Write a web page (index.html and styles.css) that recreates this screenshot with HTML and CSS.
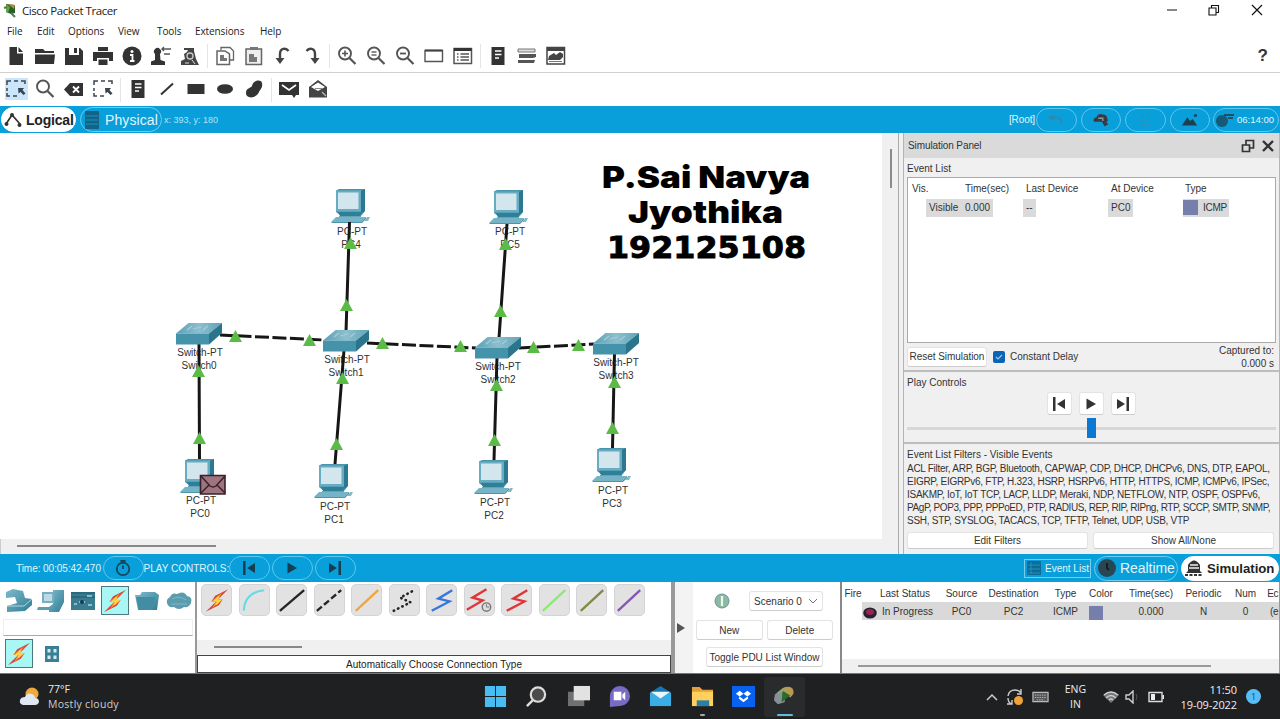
FILE: index.html
```html
<!DOCTYPE html>
<html lang="en">
<head>
<meta charset="utf-8">
<title>Cisco Packet Tracer</title>
<link rel="stylesheet" href="styles.css">
</head>
<body>
<svg class="defs" width="0" height="0" aria-hidden="true">
  <defs>
    <linearGradient id="gTeal" x1="0" y1="0" x2="1" y2="1"><stop offset="0" stop-color="#7fb9cb"/><stop offset="1" stop-color="#2f7d95"/></linearGradient>
    <linearGradient id="gTop" x1="0" y1="0" x2="1" y2="0"><stop offset="0" stop-color="#5aa0b6"/><stop offset=".5" stop-color="#8dbfce"/><stop offset="1" stop-color="#5fa5ba"/></linearGradient>
    <symbol id="pc" viewBox="0 0 40 36" overflow="visible">
      <path d="M5 1.500 8 0H34V22L30 27H10L5 23Z" fill="#4796ae"/>
      <path d="M30 2 34 0V22L30 25Z" fill="#2b7890"/>
      <rect x="5" y="1.500" width="25" height="21" fill="#69abc0"/>
      <rect x="7" y="3.500" width="20.500" height="16.500" fill="#d3e6ee"/>
      <path d="M7 23H31L29 27H9Z" fill="#2f7f98"/>
      <path d="M8 27H30V29H8Z" fill="#5fa5ba"/>
      <path d="M5 28H35L30 33H0Z" fill="#76b3c6"/><path d="M0 33H30L35 28V30L31 34H1Z" fill="#4a95ab"/>
      <path d="M33.500 32 36 28H39L37 32Z" fill="#84b8c8"/>
    </symbol>
    <symbol id="switch" viewBox="0 0 46 22" overflow="visible">
      <path d="M0 10.500 12.500 0H46L33 10.500Z" fill="url(#gTop)"/>
      <path d="M0 10.500H33V21.500H0Z" fill="#4593ab"/>
      <path d="M33 10.500 46 0V10L33 21.500Z" fill="#2b758c"/>
      <path d="M11 7 16 3M17 6 25 4M27 7 32 3" stroke="#a5cdd9" stroke-width="1.200"/>
    </symbol>
    <symbol id="up" viewBox="0 0 13 12" overflow="visible"><path d="M6.500 0 13 12H0Z" fill="#5cba47"/></symbol>
    <symbol id="bolt" viewBox="0 0 28 28"><path d="M26 2 12 9 8 15 13 15 2 26 16 19 20 13 15 13Z" fill="#d8493c"/><path d="M19 6 8 15H13L9 22 20 13H15Z" fill="#f7a51f"/><path d="M16 10 12 14H17L13 18" stroke="#ffd34a" stroke-width="2" fill="none"/></symbol>
    <symbol id="note" viewBox="0 0 20 20"><path fill="#333" d="M3.500 1H16.500V19H3.500Z"/><path d="M7 5H13.500M7 8.500H13.500M7 12H11" stroke="#fff" stroke-width="1.500"/></symbol>
    <symbol id="select" viewBox="0 0 20 20"><path d="M1 6V2H5M8 2H12M15 2H19V5M1 9V12M1 14V17H4M7 17H11" fill="none" stroke="#3b4652" stroke-width="1.500"/><path d="M12 9H18L16.500 11 19.500 14.500 17.500 16 14.500 13 12.500 14.500Z" fill="#3b4652"/></symbol>
    <symbol id="lens" viewBox="0 0 20 20"><circle cx="8" cy="7.500" r="6" fill="none" stroke="#555" stroke-width="1.900"/><path d="M12.500 12 18.500 18" stroke="#555" stroke-width="2.200"/></symbol>
    <symbol id="prev" viewBox="0 0 16 16"><path d="M2 1H4.500V15H2ZM14 3V13L6 8Z" fill="currentColor"/></symbol>
    <symbol id="play" viewBox="0 0 16 16"><path d="M3.500 2.500 13 8 3.500 13.500Z" fill="currentColor"/></symbol>
    <symbol id="next" viewBox="0 0 16 16"><path d="M14 1H11.500V15H14ZM2 3V13L10 8Z" fill="currentColor"/></symbol>
  </defs>
</svg>

<div class="app">
  <header class="titlebar">
    <svg class="logo" viewBox="0 0 14 16"><path d="M3 1 12 2V10L8 11 3 9Z" fill="#275f29"/><path d="M5 1 12 2 11 6Z" fill="#bb8a37"/><path d="M3 1 7 4 5 10 3 9Z" fill="#63a443"/><path d="M1 5 4 4M8 10 12 14" stroke="#547b52" stroke-width="2"/></svg>
    <span class="app-name">Cisco Packet Tracer</span>
    <span class="win-buttons">
      <svg viewBox="0 0 12 12"><path d="M1 6H11" stroke="#111"/></svg>
      <svg viewBox="0 0 12 12"><path d="M1 4H8V11H1ZM3.500 4V1.500H10.500V8.500H8" fill="none" stroke="#111" stroke-width="1.100"/></svg>
      <svg viewBox="0 0 12 12"><path d="M1 1 11 11M11 1 1 11" stroke="#111" stroke-width="1.200"/></svg>
    </span>
  </header>

  <nav class="menu"><span>File</span><span>Edit</span><span>Options</span><span>View</span><span>Tools</span><span>Extensions</span><span>Help</span></nav>

  <div class="toolbar main-tools">
    <i><svg viewBox="0 0 20 20"><path fill="#333" d="M3.500 1H11V7.500H17V19H3.500ZM12.500 1 17 6H12.500Z"/></svg></i>
    <i><svg viewBox="0 0 20 20"><path fill="#333" d="M0 3H8L10 5H19V7H0ZM0 8.500H20L19 18H0Z"/></svg></i>
    <i><svg viewBox="0 0 20 20"><path fill="#333" d="M1 2H5V9H15V2H16L19 5V19H1Z"/><path fill="#333" d="M10 2H13V7H10Z"/></svg></i>
    <i><svg viewBox="0 0 20 20"><path fill="#333" d="M5 1H15V5H5ZM0 6H20V15H16V12H4V15H0ZM5.500 13.500H14.500V19H5.500Z"/></svg></i>
    <i><svg viewBox="0 0 20 20"><circle cx="10" cy="10" r="9.500" fill="#333"/><circle cx="10" cy="5.500" r="1.500" fill="#fff"/><path d="M8 9H10.500V15M8 15H12.500" fill="none" stroke="#fff" stroke-width="1.800"/></svg></i>
    <i><svg viewBox="0 0 20 20"><path fill="#333" d="M4 8a3.500 3.500 0 1 1 5 0L9.500 14 14 15.500V19H0V15.500L4 14Z"/><path d="M11 3H20M13 8H19M13 1 11 3 13 5" stroke="#555" stroke-width="1.400" fill="none"/></svg></i>
    <i><svg viewBox="0 0 20 20"><path fill="#444" d="M1 19V15L5 13 4 8 7 6 8 4H4V2H14V5L16 13 19 19Z"/><circle cx="10" cy="10" r="3" fill="none" stroke="#ccc" stroke-width="1.300"/><path d="M5 17H9M12 14 15 18" stroke="#ddd"/></svg></i>
    <b></b>
    <i><svg viewBox="0 0 20 20"><path d="M6 4V1.500H15L18.500 5V14H15" fill="none" stroke="#666" stroke-width="1.300"/><path d="M2 5H10L14.500 8V18.500H2Z" fill="#fff" stroke="#666" stroke-width="1.500"/><path d="M5 9H9V12H12V15H5Z" fill="#777"/></svg></i>
    <i><svg viewBox="0 0 20 20"><path d="M2 3H17.500V18.500H2Z" fill="#eee" stroke="#666" stroke-width="1.500"/><path d="M6 1H14V4H6ZM5 8H10V11H13V16H5Z" fill="#777"/></svg></i>
    <i><svg viewBox="0 0 20 20"><path d="M15.500 5C13 1.500 7 2 7 8V15" fill="none" stroke="#444" stroke-width="2.400"/><path d="M2.500 12H11.500L7 18Z" fill="#444"/></svg></i>
    <i><svg viewBox="0 0 20 20"><path d="M4.500 5C7 1.500 13 2 13 8V15" fill="none" stroke="#444" stroke-width="2.400"/><path d="M8.500 12H17.500L13 18Z" fill="#444"/></svg></i>
    <b></b>
    <i><svg viewBox="0 0 20 20"><use href="#lens"/><path d="M5 7.500H11M8 4.500V10.500" stroke="#555" stroke-width="1.600"/></svg></i>
    <i><svg viewBox="0 0 20 20"><use href="#lens"/><path d="M5.500 6H10.500M5.500 9H10.500" stroke="#666" stroke-width="1.600"/></svg></i>
    <i><svg viewBox="0 0 20 20"><use href="#lens"/><path d="M5 7.500H11" stroke="#555" stroke-width="1.800"/></svg></i>
    <i><svg viewBox="0 0 20 20"><path d="M1 4.500H18.500V15.500H1Z" fill="#fff" stroke="#555" stroke-width="1.400"/><path d="M1 4.500H18.500" stroke="#444" stroke-width="2"/></svg></i>
    <i><svg viewBox="0 0 20 20"><path d="M1 2.500H18.500V17.500H1Z" fill="#fff" stroke="#555" stroke-width="1.500"/><path d="M1 3.500H18.500" stroke="#333" stroke-width="3"/><path d="M4 8H5.500M4 11H5.500M4 14H5.500M7.500 8H16M7.500 11H16M7.500 14H16" stroke="#555" stroke-width="1.400"/></svg></i>
    <b></b>
    <i><svg viewBox="0 0 20 20"><use href="#note"/></svg></i>
    <i><svg viewBox="0 0 20 20"><path d="M1 3H18V6H1Z" fill="#ddd" stroke="#777"/><path d="M2 8H19V11L16 12H2ZM1 14H18L17 17H1Z" fill="#555"/></svg></i>
    <i><svg viewBox="0 0 20 20"><path d="M1 1.500H18.500V18H1Z" fill="#fff" stroke="#444" stroke-width="1.500"/><path d="M1 1H18.500V5H1ZM2 14 3 10 8 7 10 9 14 6 17 8V11L14 14Z" fill="#444"/><path d="M3 15.500H16" stroke="#777"/></svg></i>
    <span class="help">?</span>
  </div>

  <div class="toolbar edit-tools">
    <i class="active"><svg viewBox="0 0 20 20"><use href="#select"/></svg></i>
    <i><svg viewBox="0 0 20 20"><use href="#lens"/></svg></i>
    <i><svg viewBox="0 0 20 20"><path fill="#333" d="M0 10.500 6 4H19V17H6Z"/><path d="M9 7.500 15 13.500M15 7.500 9 13.500" stroke="#fff" stroke-width="1.800"/></svg></i>
    <i><svg viewBox="0 0 20 20"><use href="#select"/></svg></i>
    <b></b>
    <i><svg viewBox="0 0 20 20"><use href="#note"/></svg></i>
    <i><svg viewBox="0 0 20 20"><path d="M4 15.500 16 4.500" stroke="#333" stroke-width="2"/></svg></i>
    <i><svg viewBox="0 0 20 20"><path fill="#333" d="M1.500 5H18.500V15H1.500Z"/></svg></i>
    <i><svg viewBox="0 0 20 20"><ellipse cx="10" cy="10" rx="8" ry="4.800" fill="#333"/></svg></i>
    <i><svg viewBox="0 0 20 20"><path fill="#333" d="M8 7C9 1 17 0 18 4 19 9 16 10 15 13 12 20 2 20 2 14 2 9 7 9 8 7Z"/></svg></i>
    <b></b>
    <i><svg viewBox="0 0 20 20"><path fill="#333" d="M0 3H20V16H17L15 19 13 16H0Z"/><path d="M3 6 10 11 17 6" fill="none" stroke="#fff" stroke-width="1.600"/></svg></i>
    <i><svg viewBox="0 0 20 20"><path d="M1 8 10 1 19 8V18.500H1Z" fill="#444"/><path d="M3 8 10 3.500 17 8 10 12Z" fill="#fff"/><path d="M7 9.500H14" stroke="#888"/><path d="M14 13 18 17" stroke="#bbb" stroke-width="1.300"/></svg></i>
  </div>

  <div class="bluebar top-blue">
    <span class="tab on logical"><svg viewBox="0 0 18 16"><path d="M2 12 8 3 16 12" fill="none" stroke="#333" stroke-width="1.700"/><circle cx="2.500" cy="12" r="2" fill="#333"/><circle cx="8" cy="3" r="2" fill="#333"/><circle cx="15.500" cy="13" r="2" fill="#333"/></svg>Logical</span>
    <span class="tab physical"><svg viewBox="0 0 16 18"><path fill="#126386" d="M1 0H15V18H1Z"/><path d="M2 5H14M2 9H14M2 13H14" stroke="#1586b3" stroke-width="1.500"/></svg>Physical</span>
    <span class="coords">x: 393, y: 180</span>
    <span class="root">[Root]</span>
    <span class="pill"><svg viewBox="0 0 20 16"><path d="M8 3 3 5 8 8M4 5H10Q16 6 16 11" fill="none" stroke="#45819a" stroke-width="1.700"/></svg></span>
    <span class="pill"><svg viewBox="0 0 20 16"><path d="M2 10Q1 6 5 5 7 0 12 2 17 2 17 7 19 9 16 10L18 13 14 15 11 10Z" fill="#3b3a42"/><path d="M7 6H12V9" stroke="#8a9aa4" stroke-width="1.500" fill="none"/></svg></span>
    <span class="pill"><svg viewBox="0 0 20 16"><path d="M5 3H9M12 3H15M5 7V9M15 7V9M6 13H10M13 13H15" stroke="#388aa9" stroke-width="1.500"/></svg></span>
    <span class="pill"><svg viewBox="0 0 20 16"><path d="M1 14 7 5 10 9 13 7 18 14Z" fill="#1e3f50"/><circle cx="16" cy="3" r="1.800" fill="#1e3f50"/></svg></span>
    <span class="pill clock"><svg viewBox="0 0 20 16"><circle cx="7" cy="9" r="6" fill="#185975"/><path d="M9 3H19M13 6H18" stroke="#234e61" stroke-width="2"/></svg>06:14:00</span>
  </div>

  <main class="work">
    <section class="canvas-col">
      <div class="canvas-row">
        <svg class="canvas" viewBox="0 133 882 406">
          <g>
            <use href="#pc" x="331" y="189" width="40" height="36"/>
            <use href="#pc" x="489" y="190" width="40" height="36"/>
            <use href="#pc" x="180" y="459" width="40" height="36"/>
            <use href="#pc" x="314" y="464" width="40" height="36"/>
            <use href="#pc" x="474" y="460" width="40" height="36"/>
            <use href="#pc" x="592" y="448" width="40" height="36"/>
          </g>
          <g class="dev-label">
            <text x="352" y="234.500">PC-PT</text><text x="351" y="247.500">PC4</text>
            <text x="510" y="235">PC-PT</text><text x="510" y="248">PC5</text>
            <text x="200" y="356">Switch-PT</text><text x="199" y="369">Switch0</text>
            <text x="347" y="363">Switch-PT</text><text x="346" y="376">Switch1</text>
            <text x="498" y="370">Switch-PT</text><text x="498" y="383">Switch2</text>
            <text x="616" y="366">Switch-PT</text><text x="616" y="379">Switch3</text>
            <text x="201" y="504">PC-PT</text><text x="200" y="517">PC0</text>
            <text x="335" y="510">PC-PT</text><text x="334" y="523">PC1</text>
            <text x="495" y="506">PC-PT</text><text x="494" y="519">PC2</text>
            <text x="613" y="494">PC-PT</text><text x="612" y="507">PC3</text>
          </g>
          <g stroke="#161616" stroke-width="3" fill="none">
            <path d="M199 343 199.500 459M349.500 222 346 332M344 350 335 464M507 224 499 338M497 357 494 460M614.500 353 612.500 448"/>
            <path d="M220 335 324 340M367 343 476 348M519 348 594 344" stroke-dasharray="14 3.500"/>
          </g>
          <use href="#switch" x="176" y="323" width="46" height="22"/>
          <use href="#switch" x="323" y="330" width="46" height="22"/>
          <use href="#switch" x="475" y="337" width="46" height="22"/>
          <use href="#switch" x="593" y="333" width="46" height="22"/>
          <g>
            <use href="#up" x="229" y="330" width="13" height="12"/><use href="#up" x="303" y="334" width="13" height="12"/>
            <use href="#up" x="376" y="337" width="13" height="12"/><use href="#up" x="454" y="340" width="13" height="12"/>
            <use href="#up" x="527" y="341" width="13" height="12"/><use href="#up" x="572" y="339" width="13" height="12"/>
            <use href="#up" x="340" y="299" width="13" height="12"/><use href="#up" x="344" y="237" width="13" height="12"/>
            <use href="#up" x="494" y="305" width="13" height="12"/><use href="#up" x="499" y="238" width="13" height="12"/>
            <use href="#up" x="192" y="365" width="13" height="12"/><use href="#up" x="193" y="432" width="13" height="12"/>
            <use href="#up" x="336" y="372" width="13" height="12"/><use href="#up" x="330" y="438" width="13" height="12"/>
            <use href="#up" x="490" y="379" width="13" height="12"/><use href="#up" x="488" y="434" width="13" height="12"/>
            <use href="#up" x="608" y="376" width="13" height="12"/><use href="#up" x="606" y="422" width="13" height="12"/>
          </g>
          <path d="M200.500 475.500H225V494H200.500Z" fill="#9d7480" stroke="#3a2029" stroke-width="1.600"/>
          <path d="M201 476 210 486Q213 488 216 486L225 476M201 493 209 485M225 493 217 485" fill="none" stroke="#3a2029" stroke-width="1.500"/>
          <g class="owner">
            <text x="602" y="188" textLength="208" lengthAdjust="spacingAndGlyphs">P.Sai Navya</text>
            <text x="628" y="222.500" textLength="155" lengthAdjust="spacingAndGlyphs">Jyothika</text>
            <text class="num" x="607" y="257.500" textLength="199" lengthAdjust="spacingAndGlyphs">192125108</text>
          </g>
        </svg>
        <div class="vscroll"><span></span></div>
      </div>
      <div class="hscroll"><span></span></div>
    </section>

    <aside class="sim">
      <div class="sim-title"><span>Simulation Panel</span>
        <svg viewBox="0 0 14 14"><path d="M1.500 6H8.500V12.500H1.500ZM5 6V1.500H12.500V9H8.500" fill="none" stroke="#333" stroke-width="1.700"/></svg>
        <svg viewBox="0 0 14 14"><path d="M2 2 12 12M12 2 2 12" stroke="#333" stroke-width="2.400"/></svg>
      </div>
      <div class="events">
        <div class="label">Event List</div>
        <div class="event-box">
          <div class="event-row head"><span>Vis.</span><span>Time(sec)</span><span>Last Device</span><span>At Device</span><span>Type</span></div>
          <div class="event-row"><span class="hl vis">Visible</span><span class="hl time">0.000</span><span class="hl">--</span><span class="hl">PC0</span><span class="hl icmp"><em></em>ICMP</span></div>
        </div>
        <div class="reset-row"><button class="btn reset">Reset Simulation</button><span class="check"><svg viewBox="0 0 12 12"><path d="M3 6 5 8 9 4" fill="none" stroke="#9cc8f0" stroke-width="1.200"/></svg></span><span class="delay">Constant Delay</span><span class="captured">Captured to:<br>0.000 s</span></div>
      </div>
      <div class="controls">
        <div class="label">Play Controls</div>
        <div class="play-row"><button class="btn"><svg><use href="#prev"/></svg></button><button class="btn"><svg><use href="#play"/></svg></button><button class="btn"><svg><use href="#next"/></svg></button></div>
        <div class="slider"><span></span></div>
      </div>
      <div class="filters">
        <div class="label">Event List Filters - Visible Events</div>
        <p>ACL Filter, ARP, BGP, Bluetooth, CAPWAP, CDP, DHCP, DHCPv6, DNS, DTP, EAPOL,<br>EIGRP, EIGRPv6, FTP, H.323, HSRP, HSRPv6, HTTP, HTTPS, ICMP, ICMPv6, IPSec,<br>ISAKMP, IoT, IoT TCP, LACP, LLDP, Meraki, NDP, NETFLOW, NTP, OSPF, OSPFv6,<br><span class="tight">PAgP, POP3, PPP, PPPoED, PTP, RADIUS, REP, RIP, RIPng, RTP, SCCP, SMTP, SNMP,</span><br>SSH, STP, SYSLOG, TACACS, TCP, TFTP, Telnet, UDP, USB, VTP</p>
        <div class="filter-buttons"><button class="btn">Edit Filters</button><button class="btn">Show All/None</button></div>
      </div>
    </aside>
  </main>

  <div class="bluebar low-blue">
    <span class="time">Time: 00:05:42.470</span>
    <span class="pill"><svg viewBox="0 0 20 18"><circle cx="10" cy="10" r="7" fill="none" stroke="#15455c" stroke-width="1.900"/><path d="M10 6V10M7 1H13M10 1V4" stroke="#15455c" stroke-width="1.900"/></svg></span>
    <span class="pc-label">PLAY CONTROLS:</span>
    <span class="pill"><svg viewBox="0 0 16 16"><use href="#prev"/></svg></span>
    <span class="pill"><svg viewBox="0 0 16 16"><use href="#play"/></svg></span>
    <span class="pill"><svg viewBox="0 0 16 16"><use href="#next"/></svg></span>
    <span class="evlist"><svg viewBox="0 0 14 14"><path d="M0 0H14V14H0Z" fill="#0d6c96"/><path d="M1 4H13M1 8H13M1 12H13M4 1V13" stroke="#2590bc"/></svg>Event List</span>
    <span class="tab realtime"><svg viewBox="0 0 18 18"><circle cx="9" cy="9" r="9" fill="#2b4653"/><path d="M9 4V9L11 11" fill="none" stroke="#102029" stroke-width="2"/></svg>Realtime</span>
    <span class="tab on simulation"><svg viewBox="0 0 20 18"><path d="M4 6Q10-3 16 6V12L18 14H2L4 12Z" fill="#333"/><path d="M6 6H14M5 9H15" stroke="#eee" stroke-width="1.300"/><path d="M1 16H19" stroke="#333" stroke-width="2" stroke-dasharray="3 1.500"/></svg>Simulation</span>
  </div>

  <section class="bottom">
    <div class="devices">
      <div class="cats">
        <i><svg viewBox="0 0 28 28"><path d="M1 5 8 2 18 4 20 11 27 12V18L20 24 2 25V19L12 16 10 10 1 11Z" fill="url(#gTeal)"/><path d="M2 19H19L27 12" fill="none" stroke="#b0d5df"/></svg></i>
        <i><svg viewBox="0 0 28 28"><path d="M16 3H27V15L22 25H12V20L16 17Z" fill="url(#gTeal)"/><path d="M5 5H17V16H5Z" fill="#77afc0"/><path d="M7 7H15V14H7Z" fill="#bdd9e2"/><path d="M1 20H15L13 23H0Z" fill="#5d9db0"/></svg></i>
        <i><svg viewBox="0 0 28 28"><path d="M2 5H26V23H2Z" fill="#397c92"/><path d="M2 6H26M2 10H26" stroke="#1f566a"/><path d="M10 15H16M18 9H23M5 17H8M19 18H23" stroke="#8ebbc8" stroke-width="2"/><circle cx="13" cy="15" r="2" fill="#143b49"/></svg></i>
        <i class="sel"><svg viewBox="0 0 28 28"><use href="#bolt"/></svg></i>
        <i><svg viewBox="0 0 28 28"><path d="M2 8H7L9 5H22L26 8 24 23H5Z" fill="url(#gTeal)"/><path d="M3 10H22L20 23H6Z" fill="#438da4"/></svg></i>
        <i><svg viewBox="0 0 28 28"><path d="M5 10Q7 5 12 7 19 3 22 9 28 10 26 16 24 21 19 20 14 24 9 20 3 21 2 16 1 12 5 10Z" fill="#5b9caf"/><path d="M7 12Q14 8 21 13M6 17H22" fill="none" stroke="#83b6c5"/></svg></i>
      </div>
      <div class="search"></div>
      <div class="subcats"><i class="sel"><svg viewBox="0 0 28 28"><use href="#bolt"/></svg></i><svg class="grid-icon" viewBox="0 0 16 18"><path d="M1 1H15V17H1Z" fill="#387f97"/><path d="M3.500 4H6.500V7.500H3.500ZM9.500 4H12.500V7.500H9.500ZM3.500 10.500H6.500V14H3.500ZM9.500 10.500H12.500V14H9.500Z" fill="#d7e9ef"/></svg></div>
    </div>
    <div class="connections">
      <div class="conn-row">
        <i><svg viewBox="0 0 30 30"><use href="#bolt" x="1" y="1" width="28" height="28"/></svg></i>
        <i><svg viewBox="0 0 30 30"><path d="M4 26Q5 6 26 4" fill="none" stroke="#67dbe4" stroke-width="2.200"/></svg></i>
        <i><svg viewBox="0 0 30 30"><path d="M2 26 28 4" stroke="#252525" stroke-width="2.500"/></svg></i>
        <i><svg viewBox="0 0 30 30"><path d="M2 26 28 4" stroke="#252525" stroke-width="2.500" stroke-dasharray="7 3"/></svg></i>
        <i><svg viewBox="0 0 30 30"><path d="M3 26 27 4" stroke="#efa641" stroke-width="2.500"/></svg></i>
        <i><svg viewBox="0 0 30 30"><path d="M4 26 22 17 11 12 26 4" fill="none" stroke="#252525" stroke-width="2.800" stroke-linecap="round" stroke-dasharray="0.500 4.600"/></svg></i>
        <i><svg viewBox="0 0 30 30"><path d="M4 26 23 16 11 13 26 4" fill="none" stroke="#3377df" stroke-width="2.500"/></svg></i>
        <i><svg viewBox="0 0 30 30"><path d="M2 25 19 15 8 12 23 3" fill="none" stroke="#df3438" stroke-width="2.500"/><circle cx="23" cy="22" r="4.500" fill="#ddd" stroke="#777" stroke-width="1.500"/><path d="M23 19V22H26" fill="none" stroke="#777"/></svg></i>
        <i><svg viewBox="0 0 30 30"><path d="M4 26 23 16 11 13 26 4" fill="none" stroke="#df3438" stroke-width="2.500"/></svg></i>
        <i><svg viewBox="0 0 30 30"><path d="M3 26 27 4" stroke="#8bea75" stroke-width="2.500"/></svg></i>
        <i><svg viewBox="0 0 30 30"><path d="M3 26 27 4" stroke="#858744" stroke-width="2.500"/></svg></i>
        <i><svg viewBox="0 0 30 30"><path d="M3 26 27 4" stroke="#8455b4" stroke-width="2.500"/></svg></i>
      </div>
      <div class="conn-scroll"><span></span></div>
      <div class="conn-name">Automatically Choose Connection Type</div>
    </div>
    <div class="collapse"><svg viewBox="0 0 8 10"><path d="M0 0 8 5 0 10Z" fill="#555"/></svg></div>
    <div class="scenario">
      <div class="scen-row"><svg class="info" viewBox="0 0 16 16"><circle cx="8" cy="8" r="7" fill="#8bb9a4" stroke="#6f9398"/><path d="M8 3V13" stroke="#eef8e9" stroke-width="2.200"/></svg><button class="btn pick">Scenario 0<svg viewBox="0 0 10 6"><path d="M1 1 5 5 9 1" fill="none" stroke="#777"/></svg></button></div>
      <div class="scen-row two"><button class="btn">New</button><button class="btn">Delete</button></div>
      <button class="btn toggle">Toggle PDU List Window</button>
    </div>
    <div class="pdus">
      <div class="pdu-row head"><span>Fire</span><span>Last Status</span><span>Source</span><span>Destination</span><span>Type</span><span>Color</span><span>Time(sec)</span><span>Periodic</span><span>Num</span><span class="last">Ec</span></div>
      <div class="pdu-row body"><span class="fire"><svg viewBox="0 0 14 12"><ellipse cx="7" cy="6" rx="6.800" ry="5.500" fill="#272134"/><ellipse cx="7" cy="5" rx="4" ry="3" fill="#96244c"/></svg></span><span class="status">In Progress</span><span>PC0</span><span>PC2</span><span>ICMP</span><span><em></em></span><span>0.000</span><span>N</span><span>0</span><span class="last">(e</span></div>
      <div class="pdu-scroll"><span></span></div>
    </div>
  </section>

  <footer class="taskbar">
    <svg class="weather" viewBox="0 0 24 22"><circle cx="14" cy="8" r="6.500" fill="#f2a93c"/><path d="M5 19Q1 18 2 14 3 11 7 11 9 6 14 8 17 9 17 12 21 12 21 16 20 19 17 19Z" fill="#dfe7f2"/></svg>
    <div class="temp">77°F<br><span>Mostly cloudy</span></div>
    <div class="apps">
      <i><svg viewBox="0 0 24 24"><path d="M1 1H11.500V11.500H1ZM12.500 1H23V11.500H12.500ZM1 12.500H11.500V23H1ZM12.500 12.500H23V23H12.500Z" fill="#48bdf1"/></svg></i>
      <i><svg viewBox="0 0 24 24"><circle cx="13.500" cy="10" r="7.500" fill="#4b4b4b" stroke="#ddd" stroke-width="2.300"/><path d="M8 16 2 22" stroke="#ddd" stroke-width="2.500"/></svg></i>
      <i><svg viewBox="0 0 24 24"><path d="M1 7H18V22H1Z" fill="#707070"/><path d="M7 1H24V16H7Z" fill="#e2e2e2"/></svg></i>
      <i><svg viewBox="0 0 24 24"><path d="M2 23V12A10.500 10.500 0 1 1 12 22Z" fill="#776bc4"/><path d="M6 7H14V16H6ZM15 10 18 7V16L15 13Z" fill="#fff"/></svg></i>
      <i><svg viewBox="0 0 24 24"><path d="M1 8 12 1 23 8V22H1Z" fill="#1676af"/><path d="M1 8H23V22H1Z" fill="#38aee5"/><path d="M2 7H22L12 14Z" fill="#eaf6fc"/></svg></i>
      <i class="running"><svg viewBox="0 0 24 24"><path d="M1 2H9L12 5H23V22H1Z" fill="#dfa23a"/><path d="M1 7H23V22H1Z" fill="#ffd05d"/><path d="M6 22V16H19V22" fill="#2880a6"/></svg></i>
      <i><svg viewBox="0 0 24 24"><path d="M0 1H24V23H0Z" fill="#0961ed"/><path d="M8 6 12 9 8 12 4 9ZM16 6 20 9 16 12 12 9ZM8 12 12 15 16 12 17 14 12 18 7 14Z" fill="#fff"/></svg></i>
      <i class="current"><svg viewBox="0 0 24 24"><path d="M2 10 9 4 14 8 12 18 5 20 1 16Z" fill="#879097"/><path d="M9 4Q14 0 20 3 24 8 18 13L13 9Z" fill="#bb9851"/><path d="M10 6 18 11 9 18Z" fill="#286b2a"/><path d="M5 9Q9 5 15 5" stroke="#8fb06a" stroke-width="1.500" fill="none"/></svg></i>
    </div>
    <svg class="tray chev" viewBox="0 0 12 8"><path d="M1 7 6 2 11 7" fill="none" stroke="#ccc" stroke-width="1.500"/></svg>
    <svg class="tray sync" viewBox="0 0 18 18"><path d="M2 8Q3 2 9 2 13 2 15 5M15 1V6H11M2 10Q2 15 6 16M1 16H6V12" fill="none" stroke="#ccc" stroke-width="1.400"/><circle cx="12.500" cy="12.500" r="4.500" fill="#f2a13a"/></svg>
    <svg class="tray kbd" viewBox="0 0 18 12"><path d="M1 1H17V11H1Z" fill="#555" stroke="#bbb" stroke-width="1.300"/><path d="M3 4H15M3 6.500H15M5 9H13" stroke="#bbb" stroke-dasharray="1.500 1"/></svg>
    <div class="lang">ENG<br>IN</div>
    <svg class="tray wifi" viewBox="0 0 16 12"><path d="M0 4Q8-3 16 4L8 12Z" fill="#777"/><path d="M1 4Q8-2 15 4M3 7Q8 2 13 7M6 9Q8 7 10 9" fill="none" stroke="#ccc" stroke-width="1.400"/></svg>
    <svg class="tray vol" viewBox="0 0 16 14"><path d="M1 5H4L8 1V13L4 9H1Z" fill="none" stroke="#ccc" stroke-width="1.400"/><path d="M11 4Q13 7 11 10" fill="none" stroke="#555"/></svg>
    <svg class="tray bat" viewBox="0 0 16 12"><path d="M1 1.500H14V10.500H1Z" fill="none" stroke="#ddd" stroke-width="1.400"/><path d="M3 3H7V9H3ZM14.500 4H16V8H14.500Z" fill="#eee"/></svg>
    <div class="clocktext">11:50<br>19-09-2022</div>
    <span class="badge">1</span>
  </footer>
</div>
</body>
</html>
```

FILE: styles.css
```css
* { box-sizing: border-box; }
body { margin: 0; overflow: hidden; background: #fff; color: #333; font-family: "Liberation Sans", Arial, sans-serif; font-size: 10.500px; }
i, em { font-style: normal; }
svg { display: block; flex: none; }
.defs { position: absolute; }
.app { width: 1280px; height: 719px; display: flex; flex-direction: column; overflow: hidden; white-space: nowrap; }

.titlebar { height: 22px; display: flex; align-items: center; padding: 0 17.500px 0 3px; color: #222; }
.logo { width: 14px; height: 16px; }
.app-name { margin-left: 5px; margin-top: -2px; font: 11.500px "Open Sans", sans-serif; letter-spacing: -0.450px; }
.win-buttons { margin-left: auto; display: flex; gap: 30.500px; padding-bottom: 2px; }
.win-buttons svg { width: 12px; height: 12px; }
.menu { height: 18px; padding-left: 7px; display: grid; grid-template-columns: 30px 31px 50px 39px 38px 65px 40px; align-items: center; color: #222; font: 10px "Open Sans", sans-serif; letter-spacing: -0.100px; }

.toolbar { display: flex; align-items: center; padding-left: 1.500px; }
.main-tools { height: 33px; border-bottom: 1px solid #d0d0d0; }
.edit-tools { height: 33px; }
.edit-tools i { margin-top: -1px; }
.toolbar i { width: 29px; height: 26px; display: grid; place-items: center; }
.toolbar i svg { width: 20px; height: 20px; }
.toolbar b { width: 1px; height: 24px; background: #e4e4e4; margin: 0 2.500px; }
.toolbar .active { width: 23px; margin: -1px 3px 0; height: 22px; background: #cbe6fa; }
.help { margin: 0 12px 0 auto; font-size: 17px; font-weight: bold; color: #333; }

.bluebar { background: #089fda; color: #e2f5fc; display: flex; align-items: center; }
.top-blue { height: 27px; }
.low-blue { height: 28px; }
.tab { height: 25px; border-radius: 13px; border: 1.500px solid #6ccdf0; display: flex; align-items: center; font-size: 14px; }
.tab.on { background: #fff; border-color: #fff; color: #222; font-weight: bold; }
.logical { width: 75px; margin-left: 1px; padding-left: 2px; gap: 4px; font-size: 14px; letter-spacing: -0.200px; }
.logical svg { width: 18px; height: 16px; }
.physical { width: 82px; margin-left: 4px; padding-left: 3px; gap: 5px; letter-spacing: 0.100px; }
.physical svg { width: 16px; height: 18px; }
.coords { width: 80px; margin-left: 2px; font-size: 9px; color: #b5e2f4; }
.root { margin-left: auto; font-size: 10px; letter-spacing: -0.100px; }
.pill { width: 40.500px; height: 24px; border: 1.500px solid #5ec8ed; border-radius: 12px; display: grid; place-items: center; margin-left: 3px; color: #173d50; flex: none; }
.top-blue .pill { margin-left: 4px; }
.top-blue .root + .pill { margin-left: 1px; }
.pill svg { width: 18px; height: 16px; }
.top-blue .clock { width: 66px; display: flex; padding-left: 1px; margin-right: 1px; margin-left: 3px; font-size: 9.500px; color: #e2f5fc; }
.clock svg { width: 20px; height: 16px; margin-right: 2px; }

.work { height: 421px; display: flex; background: #f0f0f0; }
.canvas-col { width: 899px; border-right: 1px solid #aaa; border-left: 1px solid #ccc; }
.canvas-row { height: 406px; display: flex; }
.canvas { width: 882px; height: 406px; background: #fff; margin-left: -1px; }
.vscroll { width: 16px; padding: 16px 0 0 8px; }
.vscroll span { display: block; width: 2px; height: 39px; background: #8b8b8b; }
.hscroll { height: 15px; padding: 6px 0 0 16px; }
.hscroll span { display: block; width: 199px; height: 2px; background: #888; }
.dev-label { font-size: 10px; text-anchor: middle; fill: #303030; }
.owner { font: 900 30.500px "Inter", sans-serif; fill: #000; }
.owner .num { font-family: "DejaVu Sans", sans-serif; font-size: 31px; font-weight: bold; stroke: #000; stroke-width: 0.900px; }

.btn { font: inherit; color: #333; background: #fff; border: 1px solid #e3e3e3; border-bottom-color: #ccc; border-radius: 3px; padding: 0; display: grid; place-items: center; }
.sim { width: 377px; margin-left: 4px; border-left: 1px solid #b5b5b5; border-right: 1px solid #b5b5b5; display: flex; flex-direction: column; }
.sim-title { height: 25px; padding: 0 4px 0 4px; display: flex; align-items: center; background: #dadada; gap: 6px; }
.sim-title span { margin-right: auto; font-size: 10px; letter-spacing: -0.100px; }
.sim-title svg { width: 14px; height: 14px; }
.events { height: 214px; border-bottom: 2px solid #bdbdbd; padding: 4px 3px 0; }
.label { font-size: 10px; line-height: 13px; height: 14px; }
.event-box { height: 166px; margin-top: 1px; background: #fff; border: 1px solid #aaa; padding-top: 1px; }
.event-row { height: 19px; display: grid; grid-template-columns: 53px 61px 85px 74px 1fr; align-items: center; font-size: 10px; padding-left: 4px; }
.hl { justify-self: start; background: #dadada; height: 18px; line-height: 18px; padding: 0 3px; margin-left: -3px; }
.hl.vis { margin-left: 14px; width: 39px; }
.hl.time { margin-left: 0; padding-left: 0; }
.hl.icmp { display: flex; align-items: center; gap: 5px; padding: 0 2px 0 0; margin-left: -2px; letter-spacing: -0.300px; }
em { display: block; width: 15px; height: 15px; background: #767fab; }
.reset-row { display: flex; align-items: center; height: 27px; }
.reset { width: 80px; height: 20px; font-size: 10px; letter-spacing: -0.050px; }
.check { width: 12px; height: 12px; border-radius: 2px; background: #0a64b7; margin-left: 6px; }
.delay { margin-left: 5px; font-size: 10px; }
.captured { margin-left: auto; text-align: right; font-size: 10px; line-height: 13px; padding-right: 2px; }
.controls { height: 72px; padding: 4px 3px 0; border-bottom: 2px solid #bdbdbd; }
.play-row { display: flex; justify-content: center; gap: 7px; margin-top: 2px; padding-right: 1px; }
.play-row .btn { width: 25px; height: 23px; }
.play-row svg { width: 16px; height: 16px; }
.slider { height: 20px; margin-top: 3px; padding-right: 1px; display: grid; place-items: center; background: linear-gradient(#d7d7d7, #d7d7d7) 0 9px / 100% 3px no-repeat; }
.slider span { width: 9px; height: 20px; background: #0b78d1; }
.filters { padding: 4px 3px 0; }
.filters p { margin: 0 0 5px; font-size: 10px; line-height: 13px; letter-spacing: -0.270px; }
.filters .tight { letter-spacing: -0.420px; }
.filter-buttons { display: flex; gap: 5px; }
.filter-buttons .btn { width: 181px; height: 17px; font-size: 10px; }

.low-blue .time { width: 87px; margin-left: 16px; font-size: 10px; letter-spacing: -0.050px; }
.low-blue .pill { width: 40.500px; margin-left: 0; }
.pc-label { width: 85.500px; font-size: 10px; }
.low-blue .pc-label ~ .pill { margin-right: 2.500px; }
.evlist { width: 67px; height: 19px; margin-left: auto; border: 1px solid #77cff0; display: flex; align-items: center; gap: 4px; padding-left: 2px; font-size: 10px; }
.evlist svg { width: 14px; height: 14px; }
.realtime { width: 84px; margin-left: 3px; padding-left: 3px; gap: 4px; letter-spacing: -0.050px; }
.realtime svg { width: 18px; height: 18px; }
.simulation { width: 98px; margin: 0 1px 0 3px; padding-left: 2px; gap: 3px; font-size: 13.200px; }
.simulation svg { width: 20px; height: 18px; }

.bottom { height: 92px; display: flex; background: #fff; border-bottom: 1px solid #777; }
.devices { width: 197px; border-right: 2px solid #999; }
.cats { display: flex; gap: 4px; padding: 4px 0 0 5px; }
.cats i, .subcats i { width: 28px; height: 29px; display: grid; place-items: center; }
.cats svg { width: 28px; height: 28px; }
.sel { background: #a8f7f4; border: 1px solid #4a7980; }
.cats .sel svg, .sel svg { width: 26px; height: 26px; }
.search { height: 17px; margin: 4px 2px 3px 3px; border: 1px solid #eee; border-bottom: 1px solid #aaa; }
.subcats { display: flex; gap: 11px; padding-left: 5px; align-items: center; }
.subcats .grid-icon { width: 16px; height: 18px; }
.connections { width: 475px; border-right: 1px solid #999; }
.conn-row { display: flex; gap: 6.500px; padding: 2px 0 0 4px; height: 58px; }
.conn-row i { width: 31px; height: 32px; background: #e2e2e2; border: 1px solid #d4d4d4; border-radius: 5px; display: grid; place-items: center; }
.conn-row svg { width: 28px; height: 29px; }
.conn-scroll { height: 15px; background: #f0f0f0; padding: 6px 0 0 17px; }
.conn-scroll span { display: block; width: 88px; height: 2px; background: #888; }
.conn-name { height: 18px; border: 1px solid #444; text-align: center; line-height: 18px; font-size: 10px; letter-spacing: 0.050px; color: #222; }
.collapse { width: 21px; background: #f3f3f3; border-left: 3px solid #999; padding-top: 41px; padding-left: 2px; }
.collapse svg { width: 8px; height: 10px; }
.scenario { width: 149px; border-right: 2px solid #888; padding: 9px 7px 0 3px; font-size: 10px; }
.scen-row { display: flex; align-items: center; }
.info { width: 16px; height: 16px; margin: 0 19px 0 18px; }
.pick { width: 74px; height: 20px; display: flex; align-items: center; justify-content: center; gap: 6px; }
.pick svg { width: 10px; height: 6px; }
.two { gap: 4px; margin-top: 9px; }
.two .btn { width: 67px; height: 20px; }
.toggle { width: 117px; height: 20px; margin: 7px 0 0 10px; }
.pdus { width: 438px; overflow: hidden; border-right: 1px solid #999; }
.pdu-row { display: grid; grid-template-columns: 22px 82px 31px 73px 31px 40px 60px 45px 39px 13px; align-items: center; text-align: center; font-size: 10px; }
.pdu-row span { justify-self: center; }
.pdu-row .last { justify-self: end; letter-spacing: -0.500px; }
.pdu-row.head { height: 20px; padding-top: 2px; }
.pdu-row.body { height: 18px; background: linear-gradient(#d9d9d9, #d9d9d9) 20px 0 no-repeat; padding-bottom: 2px; }
.pdu-row em { width: 14px; height: 14px; margin: 4px 10px 0 0; }
.pdu-row .status { padding-left: 5px; }
.pdu-row .fire { margin-left: 34px; z-index: 1; padding-top: 3px; }
.fire svg { width: 14px; height: 12px; }
.pdu-scroll { height: 16px; margin-top: 39px; background: #f0f0f0; padding: 6px 0 0 16px; }
.pdu-scroll span { display: block; height: 2px; width: 353px; background: #999; }

.taskbar { height: 45px; background: #1f2022; color: #eee; display: flex; align-items: center; font: 10.500px "Open Sans", sans-serif; }
.weather { width: 24px; height: 22px; margin-left: 18px; }
.temp { width: 78px; margin-left: 6px; line-height: 15px; font-size: 10.500px; }
.temp span { color: #cfcfcf; letter-spacing: 0.280px; }
.apps { display: flex; margin-left: 349px; }
.apps i { width: 41.300px; height: 40px; display: grid; place-items: center; border-radius: 3px; position: relative; }
.apps svg { width: 23px; height: 23px; }
.apps .current { background: #2a2b2d; }
.running::after, .current::after { content: ""; position: absolute; bottom: 1px; width: 5px; height: 2px; border-radius: 1px; background: #aaa; }
.current::after { width: 16px; background: #65b9df; }
.chev { width: 12px; height: 8px; margin-left: 181px; }
.sync { width: 18px; height: 18px; margin-left: 8px; }
.kbd { width: 17px; height: 12px; margin-left: 8px; }
.lang { width: 26px; margin-left: 13px; text-align: center; line-height: 15px; font-size: 10.500px; }
.wifi { width: 16px; height: 12px; margin-left: 15px; }
.vol { width: 16px; height: 14px; margin-left: 6px; }
.bat { width: 16px; height: 12px; margin-left: 7px; }
.clocktext { width: 60px; margin-left: auto; text-align: right; line-height: 15px; font-size: 11px; letter-spacing: -0.100px; }
.badge { width: 15px; height: 15px; border-radius: 50%; background: #56bef5; color: #174763; text-align: center; line-height: 15px; font-size: 9px; margin: 0 19px 0 9px; }
```
